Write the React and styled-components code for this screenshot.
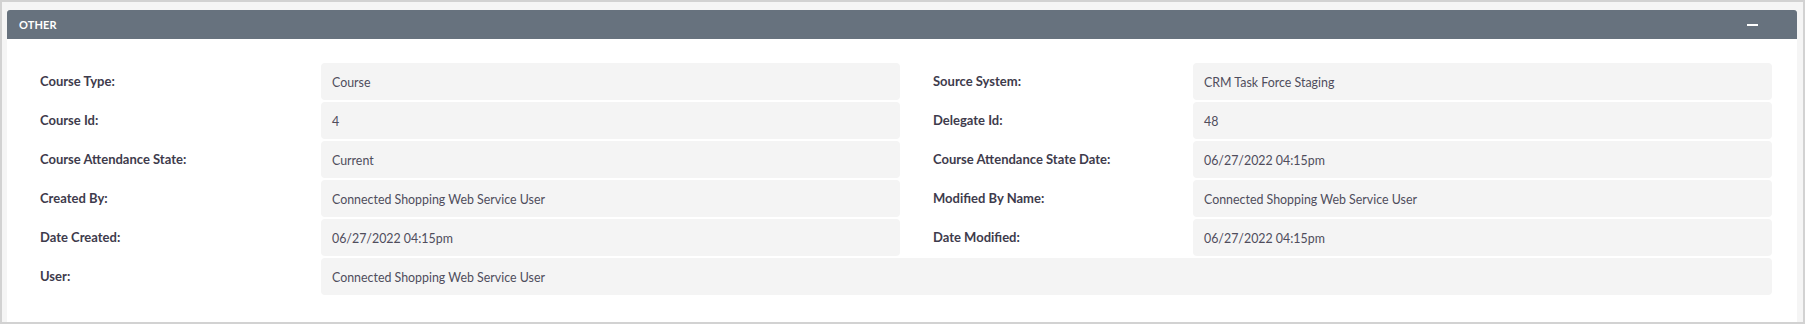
import React from 'react'
import styled, { createGlobalStyle } from 'styled-components'

const GlobalStyle = createGlobalStyle`
  html, body {
    margin: 0;
    padding: 0;
    background: #fff;
  }
  body {
    font-family: Lato, "Open Sans", "Liberation Sans", sans-serif;
  }
`

const fields = [
  ['Course Type:', 'Course', 'Source System:', 'CRM Task Force Staging'],
  ['Course Id:', '4', 'Delegate Id:', '48'],
  ['Course Attendance State:', 'Current', 'Course Attendance State Date:', '06/27/2022 04:15pm'],
  ['Created By:', 'Connected Shopping Web Service User', 'Modified By Name:', 'Connected Shopping Web Service User'],
  ['Date Created:', '06/27/2022 04:15pm', 'Date Modified:', '06/27/2022 04:15pm'],
]

const App = () => (
  <>
    <GlobalStyle />
    <Frame>
      <Panel>
        <Heading>
          <Title>Other</Title>
          <Collapse aria-label="collapse" />
        </Heading>
        <Body>
          {fields.map(([l1, v1, l2, v2]) => (
            <React.Fragment key={l1}>
              <Label>{l1}</Label>
              <Value>{v1}</Value>
              <Label $right>{l2}</Label>
              <Value>{v2}</Value>
            </React.Fragment>
          ))}
          <Label>User:</Label>
          <Value $wide>Connected Shopping Web Service User</Value>
        </Body>
      </Panel>
    </Frame>
  </>
)

const Frame = styled.div`
  box-sizing: border-box;
  width: 1805px;
  height: 324px;
  border: 2px solid #d2d2d2;
  background: #f5f5f5;
  padding: 8px 6px 0 5px;
  display: flex;
`

const Panel = styled.section`
  flex: 1;
  background: #fff;
  display: flex;
  flex-direction: column;
`

const Heading = styled.div`
  height: 29px;
  background: #67727e;
  border-radius: 3px 3px 0 0;
  display: flex;
  align-items: center;
  justify-content: space-between;
  padding: 0 39px 0 12px;
`

const Title = styled.h2`
  margin: 0;
  color: #fff;
  font-size: 11px;
  font-weight: 700;
  text-transform: uppercase;
  letter-spacing: 0.1px;
`

const Collapse = styled.span`
  width: 11px;
  height: 2px;
  margin-top: 1px;
  background: #fff;
`

const Body = styled.div`
  display: grid;
  grid-template-columns: 281px 579px 293px 579px;
  row-gap: 2px;
  grid-auto-rows: 37px;
  padding: 24px 0 0 33px;
`

const Label = styled.div`
  display: flex;
  align-items: center;
  padding-bottom: 2px;
  color: #3e3b4c;
  font-size: 13px;
  font-weight: 700;
  margin-left: ${(p) => (p.$right ? '33px' : '0')};
`

const Value = styled.div`
  display: flex;
  align-items: center;
  box-sizing: border-box;
  padding: 2px 11px 0;
  background: #f4f4f4;
  border-radius: 4px;
  color: #4f4d5c;
  font-size: 12.4px;
  grid-column: ${(p) => (p.$wide ? '2 / 5' : 'auto')};
`

export default App
